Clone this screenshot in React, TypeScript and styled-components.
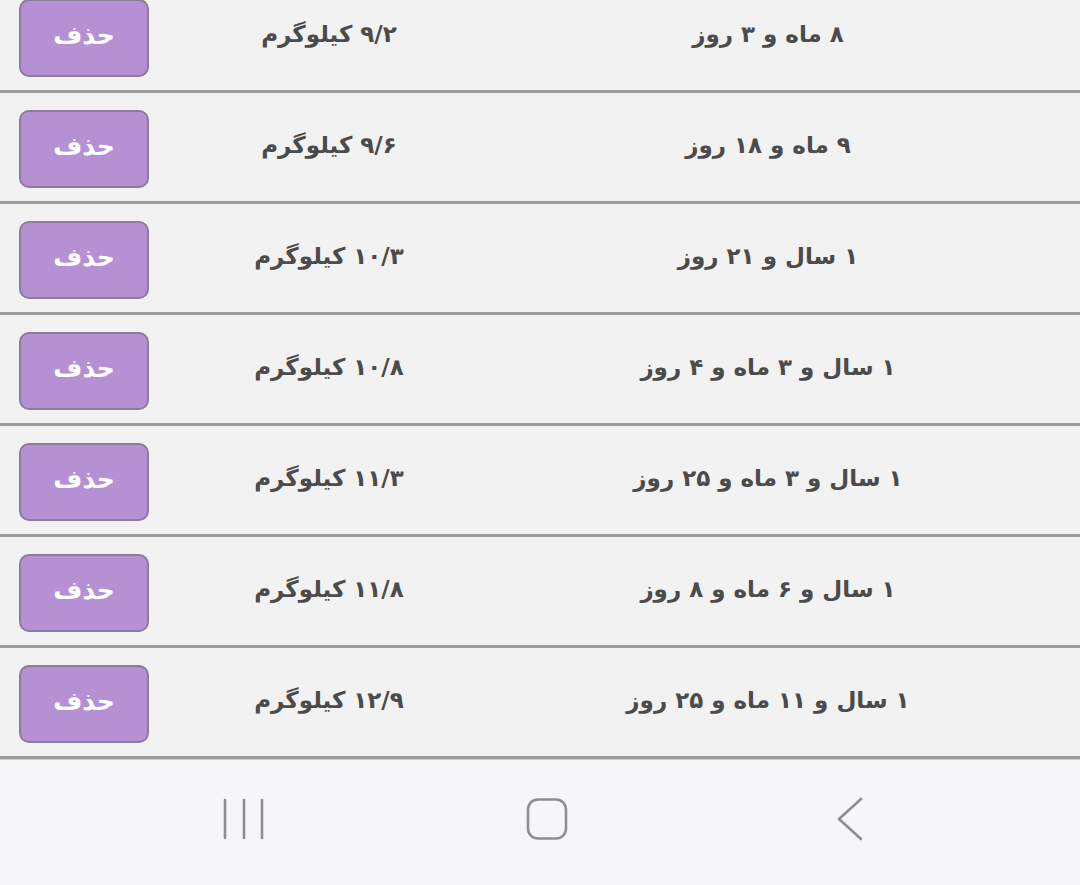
import { createGlobalStyle, styled } from 'styled-components'

type Entry = {
  age: string
  weight: string
}

const entries: Entry[] = [
  { age: '۸ ماه و ۳ روز', weight: '۹/۲ کیلوگرم' },
  { age: '۹ ماه و ۱۸ روز', weight: '۹/۶ کیلوگرم' },
  { age: '۱ سال و ۲۱ روز', weight: '۱۰/۳ کیلوگرم' },
  { age: '۱ سال و ۳ ماه و ۴ روز', weight: '۱۰/۸ کیلوگرم' },
  { age: '۱ سال و ۳ ماه و ۲۵ روز', weight: '۱۱/۳ کیلوگرم' },
  { age: '۱ سال و ۶ ماه و ۸ روز', weight: '۱۱/۸ کیلوگرم' },
  { age: '۱ سال و ۱۱ ماه و ۲۵ روز', weight: '۱۲/۹ کیلوگرم' },
]

const GlobalStyle = createGlobalStyle`
  html, body {
    margin: 0;
    padding: 0;
    background: #f2f2f2;
    overflow: hidden;
  }
  * {
    box-sizing: border-box;
  }
`

const App = () => {
  return (
    <>
      <GlobalStyle />
      <StyledScreen>
        <StyledList>
          {entries.map((entry, i) => (
            <StyledRow key={i}>
              <StyledDeleteButton type="button">حذف</StyledDeleteButton>
              <StyledCell dir="rtl">{entry.weight}</StyledCell>
              <StyledCell dir="rtl">{entry.age}</StyledCell>
            </StyledRow>
          ))}
        </StyledList>
        <StyledNavBar>
          <StyledNavButton>
            <svg width="44" height="44" viewBox="0 0 44 44" fill="none" stroke="#8e8e8e" strokeWidth="2.6" strokeLinecap="round">
              <line x1="3" y1="3" x2="3" y2="41" />
              <line x1="22" y1="3" x2="22" y2="41" />
              <line x1="40" y1="3" x2="40" y2="41" />
            </svg>
          </StyledNavButton>
          <StyledNavButton>
            <svg width="44" height="44" viewBox="0 0 44 44" fill="none" stroke="#8e8e8e" strokeWidth="2.6">
              <rect x="3" y="2.5" width="38" height="39" rx="10" />
            </svg>
          </StyledNavButton>
          <StyledNavButton>
            <svg width="44" height="44" viewBox="0 0 44 44" fill="none" stroke="#8e8e8e" strokeWidth="2.6" strokeLinecap="round" strokeLinejoin="round">
              <polyline points="33,2 11,22 33,42" />
            </svg>
          </StyledNavButton>
        </StyledNavBar>
      </StyledScreen>
    </>
  )
}

const StyledScreen = styled.div`
  width: 1080px;
  height: 885px;
  display: flex;
  flex-direction: column;
  overflow: hidden;
  background: #f2f2f2;
  font-family: 'DejaVu Sans', 'Noto Sans', sans-serif;
`

const StyledList = styled.div`
  display: flex;
  flex-direction: column;
  margin-top: -18px;
`

const StyledRow = styled.div`
  display: grid;
  grid-template-columns: 130px 360px 518px;
  align-items: center;
  height: 111px;
  padding: 0 0 3px 19px;
  border-bottom: 3px solid #9c9c9c;
  box-shadow: 0 1px 0 #cdcdcd;
  background: #f2f2f2;
`

const StyledDeleteButton = styled.button`
  width: 130px;
  height: 78px;
  margin-top: 7px;
  padding: 0 0 6px;
  border: 2px solid #8c7c99;
  border-radius: 10px;
  background: #b591d4;
  color: #ffffff;
  font-family: 'DejaVu Sans', 'Noto Sans', sans-serif;
  font-size: 25px;
  font-weight: 700;
`

const StyledCell = styled.div`
  text-align: center;
  color: #4b4b4b;
  font-size: 23px;
  font-weight: 700;
  padding-bottom: 1px;
`

const StyledNavBar = styled.div`
  flex: 1;
  display: flex;
  align-items: center;
  gap: 259px;
  padding: 0 0 8px 222px;
  background: #f6f6f8;
  margin-top: 1px;
`

const StyledNavButton = styled.div`
  width: 44px;
  height: 44px;
  display: flex;
  align-items: center;
  justify-content: center;
`

export default App
